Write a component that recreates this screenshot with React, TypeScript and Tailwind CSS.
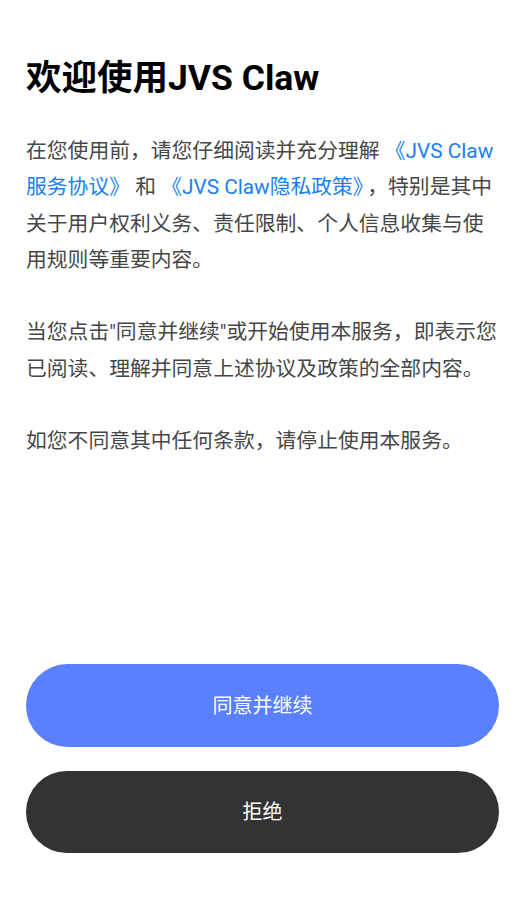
import React from "react";

export default function App() {
  const font = { fontFamily: "Roboto, 'Noto Sans CJK SC', sans-serif" };
  return (
    <div
      className="flex min-h-[899px] w-full flex-col bg-white pl-[26px] pr-[24px] pt-[57px] pb-[46px]"
      style={font}
    >
      <h1 className="text-[35.5px] font-bold leading-[42px] text-black">欢迎使用JVS Claw</h1>
      <div className="mt-[34px] text-[20.8px] leading-[36.3px] text-[#474747]">
        <p>
          在您使用前，请您仔细阅读并充分理解 <span className="text-[#1a80f5]">《JVS Claw服务协议》</span> 和{" "}
          <span className="text-[#1a80f5]">《JVS Claw隐私政策》</span>
          <span className="ml-[4px]">，</span>特别是其中关于用户权利义务、责任限制、个人信息收集与使用规则等重要内容。
        </p>
        <p className="mt-[36.3px]">
          当您点击"同意并继续"或开始使用本服务，即表示您已阅读、理解并同意上述协议及政策的全部内容。
        </p>
        <p className="mt-[36.3px]">如您不同意其中任何条款，请停止使用本服务。</p>
      </div>
      <div className="mt-auto flex flex-col gap-[24px]">
        <button className="flex h-[83px] w-full items-center justify-center rounded-full bg-[#5b80ff] text-[20px] text-white">
          同意并继续
        </button>
        <button className="flex h-[82px] w-full items-center justify-center rounded-full bg-[#333333] text-[20px] text-white">
          拒绝
        </button>
      </div>
    </div>
  );
}
